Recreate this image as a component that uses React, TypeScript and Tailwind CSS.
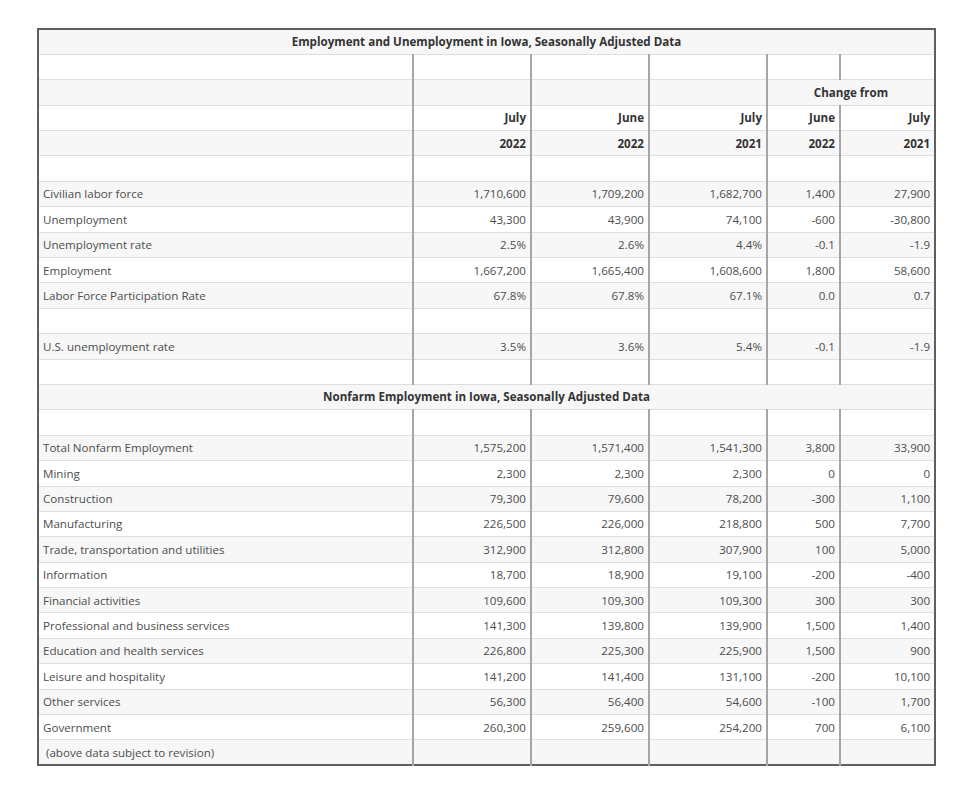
import React from 'react';

type Row = { label: string; v: string[] };

const laborRows: Row[] = [
  { label: 'Civilian labor force', v: ['1,710,600', '1,709,200', '1,682,700', '1,400', '27,900'] },
  { label: 'Unemployment', v: ['43,300', '43,900', '74,100', '-600', '-30,800'] },
  { label: 'Unemployment rate', v: ['2.5%', '2.6%', '4.4%', '-0.1', '-1.9'] },
  { label: 'Employment', v: ['1,667,200', '1,665,400', '1,608,600', '1,800', '58,600'] },
  { label: 'Labor Force Participation Rate', v: ['67.8%', '67.8%', '67.1%', '0.0', '0.7'] },
];

const nonfarmRows: Row[] = [
  { label: 'Total Nonfarm Employment', v: ['1,575,200', '1,571,400', '1,541,300', '3,800', '33,900'] },
  { label: 'Mining', v: ['2,300', '2,300', '2,300', '0', '0'] },
  { label: 'Construction', v: ['79,300', '79,600', '78,200', '-300', '1,100'] },
  { label: 'Manufacturing', v: ['226,500', '226,000', '218,800', '500', '7,700'] },
  { label: 'Trade, transportation and utilities', v: ['312,900', '312,800', '307,900', '100', '5,000'] },
  { label: 'Information', v: ['18,700', '18,900', '19,100', '-200', '-400'] },
  { label: 'Financial activities', v: ['109,600', '109,300', '109,300', '300', '300'] },
  { label: 'Professional and business services', v: ['141,300', '139,800', '139,900', '1,500', '1,400'] },
  { label: 'Education and health services', v: ['226,800', '225,300', '225,900', '1,500', '900'] },
  { label: 'Leisure and hospitality', v: ['141,200', '141,400', '131,100', '-200', '10,100'] },
  { label: 'Other services', v: ['56,300', '56,400', '54,600', '-100', '1,700'] },
  { label: 'Government', v: ['260,300', '259,600', '254,200', '700', '6,100'] },
];

const td = 'h-[25.4px] px-[4px] py-0 border-t border-[#dedede] align-middle whitespace-nowrap';
const vl = 'border-l-2 border-l-[#a6a6a6]';

function DataRow({ label, v, bold }: { label: string; v: string[]; bold?: boolean }) {
  return (
    <tr className="odd:bg-[#f7f7f7] even:bg-white">
      <td className={`${td} text-left`}>{label}</td>
      {v.map((x, i) => (
        <td key={i} className={`${td} ${vl} text-right ${bold ? 'font-bold text-[#333]' : ''}`}>
          {x}
        </td>
      ))}
    </tr>
  );
}

const blank = ['', '', '', '', ''];

function TitleRow({ text }: { text: string }) {
  return (
    <tr className="odd:bg-[#f7f7f7] even:bg-white">
      <td colSpan={6} className={`${td} text-center font-bold text-[#333]`}>
        {text}
      </td>
    </tr>
  );
}

export default function App() {
  return (
    <div className="min-h-[796px] bg-white pl-[37px] pt-[28px] font-['Open_Sans',sans-serif] text-[11.6px] text-[#4d4d4d]">
      <table className="table-fixed border-collapse border-2 border-[#5f5f5f] w-[897px]">
        <colgroup>
          <col className="w-[375px]" />
          <col className="w-[118px]" />
          <col className="w-[118px]" />
          <col className="w-[118px]" />
          <col className="w-[73px]" />
          <col className="w-[95px]" />
        </colgroup>
        <tbody>
          <TitleRow text="Employment and Unemployment in Iowa, Seasonally Adjusted Data" />
          <DataRow label="" v={blank} />
          <tr className="odd:bg-[#f7f7f7] even:bg-white">
            <td className={td}></td>
            <td className={`${td} ${vl}`}></td>
            <td className={`${td} ${vl}`}></td>
            <td className={`${td} ${vl}`}></td>
            <td colSpan={2} className={`${td} ${vl} text-center font-bold text-[#333]`}>
              Change from
            </td>
          </tr>
          <DataRow label="" v={['July', 'June', 'July', 'June', 'July']} bold />
          <DataRow label="" v={['2022', '2022', '2021', '2022', '2021']} bold />
          <DataRow label="" v={blank} />
          {laborRows.map((r) => (
            <DataRow key={r.label} label={r.label} v={r.v} />
          ))}
          <DataRow label="" v={blank} />
          <DataRow label="U.S. unemployment rate" v={['3.5%', '3.6%', '5.4%', '-0.1', '-1.9']} />
          <DataRow label="" v={blank} />
          <TitleRow text="Nonfarm Employment in Iowa, Seasonally Adjusted Data" />
          <DataRow label="" v={blank} />
          {nonfarmRows.map((r) => (
            <DataRow key={r.label} label={r.label} v={r.v} />
          ))}
          <DataRow label={'\u00a0(above data subject to revision)'} v={blank} />
        </tbody>
      </table>
    </div>
  );
}
